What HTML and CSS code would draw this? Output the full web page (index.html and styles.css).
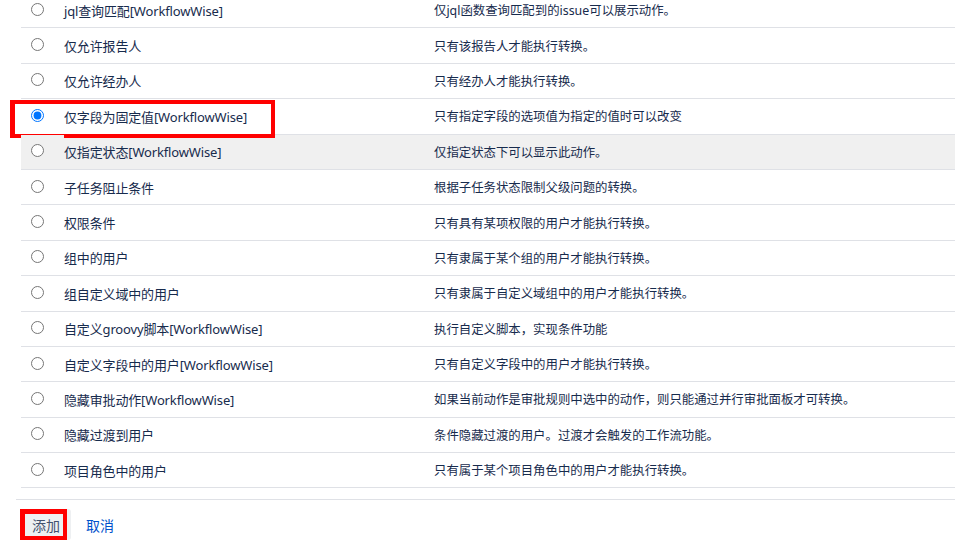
FILE: index.html
```html
<!DOCTYPE html>
<html lang="zh-CN">

<head>
    <meta charset="UTF-8">
    <title>添加条件</title>
    <link rel="stylesheet" href="styles.css">
</head>

<body>
    <form class="condition-form">
        <table class="condition-table">
            <tbody>
                <tr>
                    <td class="col-radio"><input type="radio" name="condition"></td>
                    <td class="col-name">jql查询匹配[WorkflowWise]</td>
                    <td class="col-desc">仅jql函数查询匹配到的issue可以展示动作。</td>
                </tr>
                <tr>
                    <td class="col-radio"><input type="radio" name="condition"></td>
                    <td class="col-name">仅允许报告人</td>
                    <td class="col-desc">只有该报告人才能执行转换。</td>
                </tr>
                <tr>
                    <td class="col-radio"><input type="radio" name="condition"></td>
                    <td class="col-name">仅允许经办人</td>
                    <td class="col-desc">只有经办人才能执行转换。</td>
                </tr>
                <tr>
                    <td class="col-radio"><input type="radio" name="condition" checked><span class="mark mark-row"></span></td>
                    <td class="col-name">仅字段为固定值[WorkflowWise]</td>
                    <td class="col-desc">只有指定字段的选项值为指定的值时可以改变</td>
                </tr>
                <tr class="hover">
                    <td class="col-radio"><input type="radio" name="condition"></td>
                    <td class="col-name">仅指定状态[WorkflowWise]</td>
                    <td class="col-desc">仅指定状态下可以显示此动作。</td>
                </tr>
                <tr>
                    <td class="col-radio"><input type="radio" name="condition"></td>
                    <td class="col-name">子任务阻止条件</td>
                    <td class="col-desc">根据子任务状态限制父级问题的转换。</td>
                </tr>
                <tr>
                    <td class="col-radio"><input type="radio" name="condition"></td>
                    <td class="col-name">权限条件</td>
                    <td class="col-desc">只有具有某项权限的用户才能执行转换。</td>
                </tr>
                <tr>
                    <td class="col-radio"><input type="radio" name="condition"></td>
                    <td class="col-name">组中的用户</td>
                    <td class="col-desc">只有隶属于某个组的用户才能执行转换。</td>
                </tr>
                <tr>
                    <td class="col-radio"><input type="radio" name="condition"></td>
                    <td class="col-name">组自定义域中的用户</td>
                    <td class="col-desc">只有隶属于自定义域组中的用户才能执行转换。</td>
                </tr>
                <tr>
                    <td class="col-radio"><input type="radio" name="condition"></td>
                    <td class="col-name">自定义groovy脚本[WorkflowWise]</td>
                    <td class="col-desc">执行自定义脚本，实现条件功能</td>
                </tr>
                <tr>
                    <td class="col-radio"><input type="radio" name="condition"></td>
                    <td class="col-name">自定义字段中的用户[WorkflowWise]</td>
                    <td class="col-desc">只有自定义字段中的用户才能执行转换。</td>
                </tr>
                <tr>
                    <td class="col-radio"><input type="radio" name="condition"></td>
                    <td class="col-name">隐藏审批动作[WorkflowWise]</td>
                    <td class="col-desc">如果当前动作是审批规则中选中的动作，则只能通过并行审批面板才可转换。</td>
                </tr>
                <tr>
                    <td class="col-radio"><input type="radio" name="condition"></td>
                    <td class="col-name">隐藏过渡到用户</td>
                    <td class="col-desc">条件隐藏过渡的用户。过渡才会触发的工作流功能。</td>
                </tr>
                <tr>
                    <td class="col-radio"><input type="radio" name="condition"></td>
                    <td class="col-name">项目角色中的用户</td>
                    <td class="col-desc">只有属于某个项目角色中的用户才能执行转换。</td>
                </tr>
            </tbody>
        </table>
        <div class="buttons">
            <span class="btn-wrap">
                <button type="button" class="btn">添加</button>
                <span class="mark mark-btn"></span>
            </span>
            <a href="#" class="cancel">取消</a>
        </div>
    </form>
</body>

</html>
```

FILE: styles.css
```css
body {
    margin: 0;
    font-family: "Noto Sans", "Noto Sans CJK SC", sans-serif;
    color: #172b4d;
    background: #fff;
}

.condition-form {
    margin-top: -7px;
}

.condition-table {
    border-collapse: collapse;
    margin-left: 21px;
    width: 934px;
}

.condition-table td {
    height: 34.4px;
    padding: 0;
    border-bottom: 1px solid #dfe1e6;
    vertical-align: middle;
}

.condition-table tr.hover td {
    background: #f0f0f0;
}

.col-radio {
    width: 43px;
    position: relative;
}

.col-radio input {
    margin: 0 0 0 10px;
    width: 13px;
    height: 13px;
    display: block;
    position: relative;
    top: -1px;
}

.col-name {
    width: 370px;
    font-size: 13px;
    letter-spacing: -0.15px;
    white-space: nowrap;
}

.col-desc {
    font-size: 12.4px;
    white-space: nowrap;
}

/*标注框*/
.mark {
    position: absolute;
    border: 4px solid #ff0000;
    box-sizing: border-box;
    pointer-events: none;
}

.mark-row {
    left: -11px;
    top: 1px;
    width: 265px;
    height: 38px;
    border-left-width: 5px;
}

.buttons {
    margin: 11px 0 0 16px;
    border-top: 1px solid #dfe1e6;
    padding: 9px 0 0 5px;
    display: flex;
    align-items: center;
    gap: 15px;
}

.btn-wrap {
    position: relative;
    display: inline-block;
}

.btn {
    display: block;
    border: 0;
    border-radius: 3px;
    background: #eef0f2;
    color: #42526e;
    font-family: inherit;
    font-size: 14px;
    height: 31px;
    width: 50px;
    padding: 0;
}

.mark-btn {
    left: -1px;
    top: 0;
    width: 47px;
    height: 32px;
    border-width: 5px 4px 5px 5px;
}

.cancel {
    color: #0052cc;
    text-decoration: none;
    font-size: 14px;
}
```
